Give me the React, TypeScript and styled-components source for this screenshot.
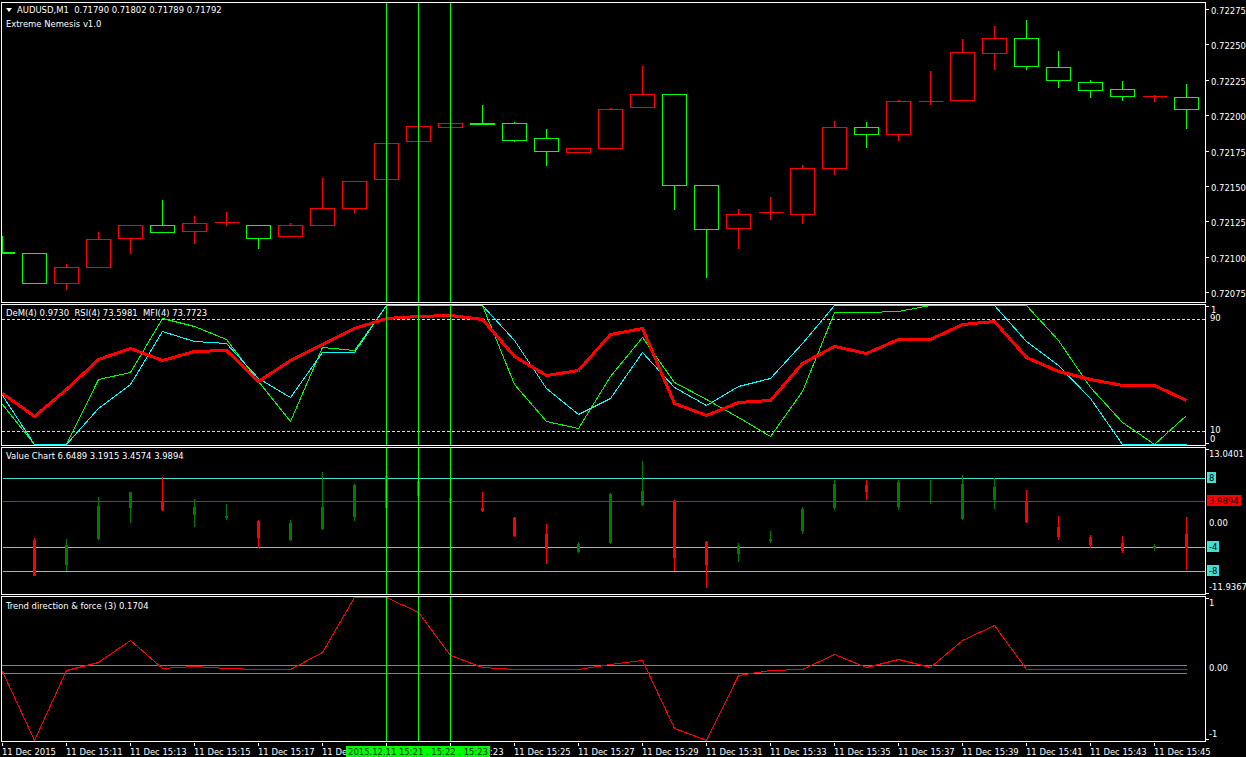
import { createGlobalStyle, styled } from "styled-components";

type Candle = [x: number, up: boolean, high: number, top: number, bottom: number, low: number];
type AxisMark = { y: number; text?: string; x?: number; bg?: string; tick?: number };
type TimeLabel = { text: string; indent?: number };

const GREEN = "#00ff00";
const RED = "#ff0000";
const CYAN = "#00ffff";
const TURQUOISE = "#40e0d0";
const DARK_GREEN = "#007a00";
const FONT = `"DejaVu Sans Condensed", "DejaVu Sans", sans-serif`;

const GlobalStyle = createGlobalStyle`
  html, body {
    margin: 0;
    background: #000;
  }
  body {
    width: 1246px;
    height: 757px;
    overflow: hidden;
  }
`;

const Terminal = styled.div`
  display: flex;
  flex-direction: column;
  gap: 1px;
  width: 1246px;
  height: 757px;
  padding: 2px 0 0 1px;
  box-sizing: border-box;
  background: #000;
  color: #fff;
  font-family: ${FONT};
  font-stretch: condensed;
  font-size: 9.4px;
`;

const PanelRow = styled.div<{ $height: number }>`
  display: flex;
  height: ${(p) => p.$height}px;
  flex: none;
`;

const Frame = styled.div`
  position: relative;
  width: 1205px;
  flex: none;
  box-sizing: border-box;
  border: 1px solid #fff;
  background: #000;
`;

const Plot = styled.svg`
  display: block;
  width: 100%;
  height: 100%;
  shape-rendering: crispEdges;
`;

const Legend = styled.div<{ $top: number }>`
  position: absolute;
  left: 4px;
  top: ${(p) => p.$top}px;
  display: flex;
  flex-direction: column;
  line-height: 14px;
  white-space: pre;
`;

const SymbolLine = styled.div`
  display: flex;
  align-items: center;
  gap: 5px;
`;

const Arrow = styled.span`
  width: 0;
  height: 0;
  border-left: 3.5px solid transparent;
  border-right: 3.5px solid transparent;
  border-top: 4px solid #fff;
`;

const PriceAxis = styled.div`
  position: relative;
  flex: 1;
`;

const AxisTick = styled.i<{ $y: number }>`
  position: absolute;
  left: 0;
  top: ${(p) => p.$y}px;
  width: 3px;
  height: 1px;
  background: #fff;
`;

const AxisLabel = styled.span<{ $y: number; $x: number; $bg?: string }>`
  position: absolute;
  left: ${(p) => p.$x}px;
  top: ${(p) => p.$y - 6}px;
  height: ${(p) => (p.$bg ? 11 : 12)}px;
  padding: ${(p) => (p.$bg ? "0 2px" : "0")};
  line-height: ${(p) => (p.$bg ? 11 : 12)}px;
  color: ${(p) => (p.$bg ? "#000" : "#fff")};
  background: ${(p) => p.$bg ?? "transparent"};
  white-space: nowrap;
`;

const TimeAxis = styled.div`
  position: relative;
  display: flex;
  flex: 1;
  padding-left: 1px;
`;

const TimeCell = styled.div<{ $indent?: number }>`
  position: relative;
  flex: none;
  width: 64px;
  box-sizing: border-box;
  padding: 3px 0 0 ${(p) => p.$indent ?? 0}px;
  line-height: 12px;
  white-space: nowrap;

  &::before {
    content: "";
    position: absolute;
    left: 0;
    top: 0;
    width: 1px;
    height: 3px;
    background: #fff;
  }
`;

const CrosshairTag = styled.div`
  position: absolute;
  left: 345px;
  top: 3px;
  width: 144px;
  height: 11px;
  line-height: 11px;
  text-align: center;
  white-space: pre;
  color: #002a00;
  background: ${GREEN};
`;

const col = (n: number) => n + 0.5;

const points = (ys: number[]) => ys.map((y, i) => `${col(2 + 32 * i)},${col(y)}`).join(" ");

const Candles = ({ data }: { data: Candle[] }) => (
  <>
    {data.map(([x, up, high, top, bottom, low]) => {
      const color = up ? GREEN : RED;
      return (
        <g key={x} stroke={color} strokeWidth={1} fill="none">
          <line x1={col(x)} x2={col(x)} y1={col(high)} y2={col(top)} />
          <line x1={col(x)} x2={col(x)} y1={col(bottom)} y2={col(low) + 0.5} />
          {top === bottom ? (
            <line x1={col(x - 12)} x2={col(x + 12)} y1={col(top)} y2={col(top)} />
          ) : (
            <rect x={col(x - 12)} y={col(top)} width={24} height={bottom - top} fill="#000" />
          )}
        </g>
      );
    })}
  </>
);

// crosshair period separators drawn in every sub window
const Separators = ({ from, to }: { from: number; to: number }) => (
  <g stroke={GREEN} strokeWidth={1}>
    {[386, 418, 450].map((x) => (
      <line key={x} x1={col(x)} x2={col(x)} y1={from} y2={to} />
    ))}
  </g>
);

const Axis = ({ marks }: { marks: AxisMark[] }) => (
  <PriceAxis>
    {marks.map((m, i) => (
      <span key={i}>
        {m.tick !== undefined && <AxisTick $y={m.tick} />}
        {m.text && (
          <AxisLabel $y={m.y} $x={m.x ?? 5} $bg={m.bg}>
            {m.text}
          </AxisLabel>
        )}
      </span>
    ))}
  </PriceAxis>
);

const priceCandles: Candle[] = [
  [2, true, 235, 252, 253, 253],
  [34, true, 252, 253, 283, 283],
  [66, false, 263, 267, 283, 289],
  [98, false, 231, 239, 267, 267],
  [130, false, 225, 225, 238, 253],
  [162, true, 199, 225, 232, 232],
  [194, false, 215, 223, 231, 243],
  [226, false, 211, 222, 222, 225],
  [258, true, 225, 225, 238, 248],
  [290, false, 222, 225, 236, 236],
  [322, false, 177, 208, 225, 225],
  [354, false, 181, 181, 208, 212],
  [386, false, 143, 143, 179, 179],
  [418, false, 126, 126, 141, 141],
  [450, false, 123, 123, 127, 127],
  [482, true, 104, 123, 124, 124],
  [514, true, 121, 123, 140, 141],
  [546, true, 128, 138, 151, 165],
  [578, false, 147, 148, 152, 152],
  [610, false, 107, 109, 148, 148],
  [642, false, 65, 94, 107, 107],
  [674, true, 94, 94, 185, 209],
  [706, true, 185, 185, 229, 277],
  [738, false, 208, 214, 228, 248],
  [770, false, 196, 212, 212, 219],
  [802, false, 164, 168, 214, 223],
  [834, false, 120, 127, 168, 174],
  [866, true, 121, 127, 134, 147],
  [898, false, 99, 101, 134, 140],
  [930, false, 70, 101, 101, 104],
  [962, false, 38, 52, 100, 100],
  [994, false, 25, 38, 53, 69],
  [1026, true, 19, 38, 66, 69],
  [1058, true, 50, 67, 80, 87],
  [1090, true, 79, 82, 90, 97],
  [1122, true, 80, 89, 96, 100],
  [1154, false, 94, 96, 96, 101],
  [1186, true, 83, 97, 109, 128],
];

const demRed = [
  393, 416, 389, 359, 348, 360, 351, 350, 381, 360, 344, 328, 318, 316, 315, 319, 356, 375, 370,
  334, 328, 403, 415, 402, 400, 363, 346, 353, 339, 339, 324, 321, 357, 371, 379, 385, 385, 400,
];
const demGreen = [
  404, 444, 444, 379, 372, 318, 326, 339, 381, 421, 347, 350, 305, 305, 305, 305, 384, 421, 428,
  376, 337, 382, 399, 417, 436, 391, 312, 312, 311, 305, 305, 305, 305, 340, 387, 422, 444, 415,
];
const demCyan = [
  395, 444, 444, 408, 384, 331, 341, 343, 378, 397, 352, 352, 305, 305, 305, 305, 340, 388, 414,
  398, 352, 387, 405, 386, 378, 343, 305, 305, 305, 305, 305, 305, 341, 365, 398, 444, 444, 444,
];

const valueBars: Candle[] = [
  [34, false, 538, 540, 575, 575],
  [66, true, 539, 545, 564, 570],
  [98, true, 497, 506, 538, 539],
  [130, true, 492, 492, 507, 522],
  [162, false, 477, 501, 509, 510],
  [194, true, 499, 507, 514, 526],
  [226, true, 504, 516, 517, 519],
  [258, false, 520, 521, 537, 547],
  [290, true, 520, 523, 539, 540],
  [322, true, 472, 507, 528, 529],
  [354, true, 484, 485, 516, 520],
  [386, true, 476, 476, 507, 507],
  [418, true, 481, 481, 495, 495],
  [450, true, 498, 498, 502, 502],
  [482, false, 492, 508, 510, 511],
  [514, false, 517, 518, 535, 536],
  [546, false, 524, 534, 548, 563],
  [578, true, 542, 544, 551, 552],
  [610, true, 493, 494, 542, 543],
  [642, true, 461, 491, 504, 505],
  [674, false, 500, 501, 557, 570],
  [706, false, 541, 542, 564, 587],
  [738, true, 543, 546, 553, 561],
  [770, true, 531, 539, 540, 542],
  [802, true, 507, 509, 530, 533],
  [834, true, 480, 484, 507, 509],
  [866, false, 480, 485, 491, 499],
  [898, true, 480, 482, 506, 509],
  [930, true, 480, 503, 503, 503],
  [962, true, 475, 484, 518, 519],
  [994, true, 478, 487, 499, 508],
  [1026, false, 490, 502, 521, 522],
  [1058, false, 516, 527, 536, 539],
  [1090, false, 535, 537, 544, 547],
  [1122, false, 536, 543, 550, 552],
  [1154, true, 544, 546, 547, 550],
  [1186, false, 517, 534, 547, 569],
];

const trendLine = [
  671, 740, 670, 662, 640, 668, 666, 668, 669, 669, 652, 597, 597, 612, 655, 667, 669, 669, 669,
  664, 660, 728, 740, 675, 670, 669, 654, 667, 659, 667, 640, 625, 669, 669, 669, 669, 669, 669,
];

const priceMarks: AxisMark[] = [
  { y: 9, tick: 7, text: "0.72275" },
  { y: 44, tick: 42, text: "0.72250" },
  { y: 80, tick: 78, text: "0.72225" },
  { y: 115, tick: 113, text: "0.72200" },
  { y: 151, tick: 149, text: "0.72175" },
  { y: 186, tick: 184, text: "0.72150" },
  { y: 221, tick: 219, text: "0.72125" },
  { y: 257, tick: 255, text: "0.72100" },
  { y: 292, tick: 290, text: "0.72075" },
];

const demMarks: AxisMark[] = [
  { y: 6, tick: 2, text: "1", x: 5 },
  { y: 14, text: "90", x: 4 },
  { y: 126, text: "10", x: 4 },
  { y: 135, tick: 139, text: "0", x: 4 },
];

const valueMarks: AxisMark[] = [
  { y: 7, tick: 2, text: "13.0401", x: 3 },
  { y: 31, text: "8", x: 1, bg: TURQUOISE },
  { y: 54, text: "3.9894", x: 1, bg: RED },
  { y: 76, text: "0.00", x: 3 },
  { y: 100, text: "-4", x: 1, bg: TURQUOISE },
  { y: 124, text: "-8", x: 1, bg: TURQUOISE },
  { y: 140, tick: 146, text: "-11.9367", x: 3 },
];

const trendMarks: AxisMark[] = [
  { y: 7, tick: 2, text: "1", x: 3 },
  { y: 72, text: "0.00", x: 3 },
  { y: 138, tick: 143, text: "-1", x: 3 },
];

// the labels under the crosshair tag only show their uncovered part
const timeLabels: TimeLabel[] = [
  { text: "11 Dec 2015" },
  ...Array.from({ length: 18 }, (_, i) => ({ text: `11 Dec 15:${11 + i * 2}` })),
];
timeLabels[5] = { text: "11 De" };
timeLabels[6] = { text: "" };
timeLabels[7] = { text: ":23", indent: 40 };

export default function App() {
  return (
    <>
      <GlobalStyle />
      <Terminal>
        <PanelRow $height={301}>
          <Frame>
            <Plot viewBox="2 3 1203 299">
              <Candles data={priceCandles} />
              <Separators from={3} to={302} />
            </Plot>
            <Legend $top={0}>
              <SymbolLine>
                <Arrow />
                <span>AUDUSD,M1  0.71790 0.71802 0.71789 0.71792</span>
              </SymbolLine>
              <span>Extreme Nemesis v1.0</span>
            </Legend>
          </Frame>
          <Axis marks={priceMarks} />
        </PanelRow>

        <PanelRow $height={142}>
          <Frame>
            <Plot viewBox="2 305 1203 140">
              <g stroke="#d8d8d8" strokeDasharray="3 2">
                <line x1={2} x2={1205} y1={319.5} y2={319.5} />
                <line x1={2} x2={1205} y1={431.5} y2={431.5} />
              </g>
              <polyline points={points(demGreen)} fill="none" stroke={GREEN} />
              <polyline points={points(demCyan)} fill="none" stroke={CYAN} />
              <polyline points={points(demRed)} fill="none" stroke={RED} strokeWidth={3} />
              <Separators from={305} to={445} />
            </Plot>
            <Legend $top={1}>
              <span>DeM(4) 0.9730  RSI(4) 73.5981  MFI(4) 73.7723</span>
            </Legend>
          </Frame>
          <Axis marks={demMarks} />
        </PanelRow>

        <PanelRow $height={148}>
          <Frame>
            <Plot viewBox="2 448 1203 146">
              <g stroke={TURQUOISE}>
                <line x1={3} x2={1205} y1={478.5} y2={478.5} />
                <line x1={3} x2={1205} y1={547.5} y2={547.5} />
                <line x1={3} x2={1205} y1={571.5} y2={571.5} />
              </g>
              <line x1={3} x2={1205} y1={501.5} y2={501.5} stroke={RED} />
              {valueBars.map(([x, up, high, top, bottom, low]) => (
                <g key={x} fill={up ? DARK_GREEN : RED}>
                  <rect x={x} y={high} width={1} height={low - high + 1} />
                  {bottom > top && <rect x={x - 1} y={top} width={3} height={bottom - top + 1} />}
                </g>
              ))}
              <Separators from={448} to={594} />
            </Plot>
            <Legend $top={1}>
              <span>Value Chart 6.6489 3.1915 3.4574 3.9894</span>
            </Legend>
          </Frame>
          <Axis marks={valueMarks} />
        </PanelRow>

        <PanelRow $height={146}>
          <Frame>
            <Plot viewBox="2 597 1203 144">
              <g stroke="#808080">
                <line x1={2} x2={1187} y1={665.5} y2={665.5} />
                <line x1={2} x2={1187} y1={673.5} y2={673.5} />
              </g>
              <polyline points={points(trendLine)} fill="none" stroke={RED} />
              <Separators from={597} to={741} />
            </Plot>
            <Legend $top={2}>
              <span>Trend direction &amp; force (3) 0.1704</span>
            </Legend>
          </Frame>
          <Axis marks={trendMarks} />
        </PanelRow>

        <TimeAxis>
          {timeLabels.map((label, i) => (
            <TimeCell key={i} $indent={label.indent}>
              {label.text}
            </TimeCell>
          ))}
          <CrosshairTag>2015.12.11 15:21 . 15:22 . 15:23</CrosshairTag>
        </TimeAxis>
      </Terminal>
    </>
  );
}
